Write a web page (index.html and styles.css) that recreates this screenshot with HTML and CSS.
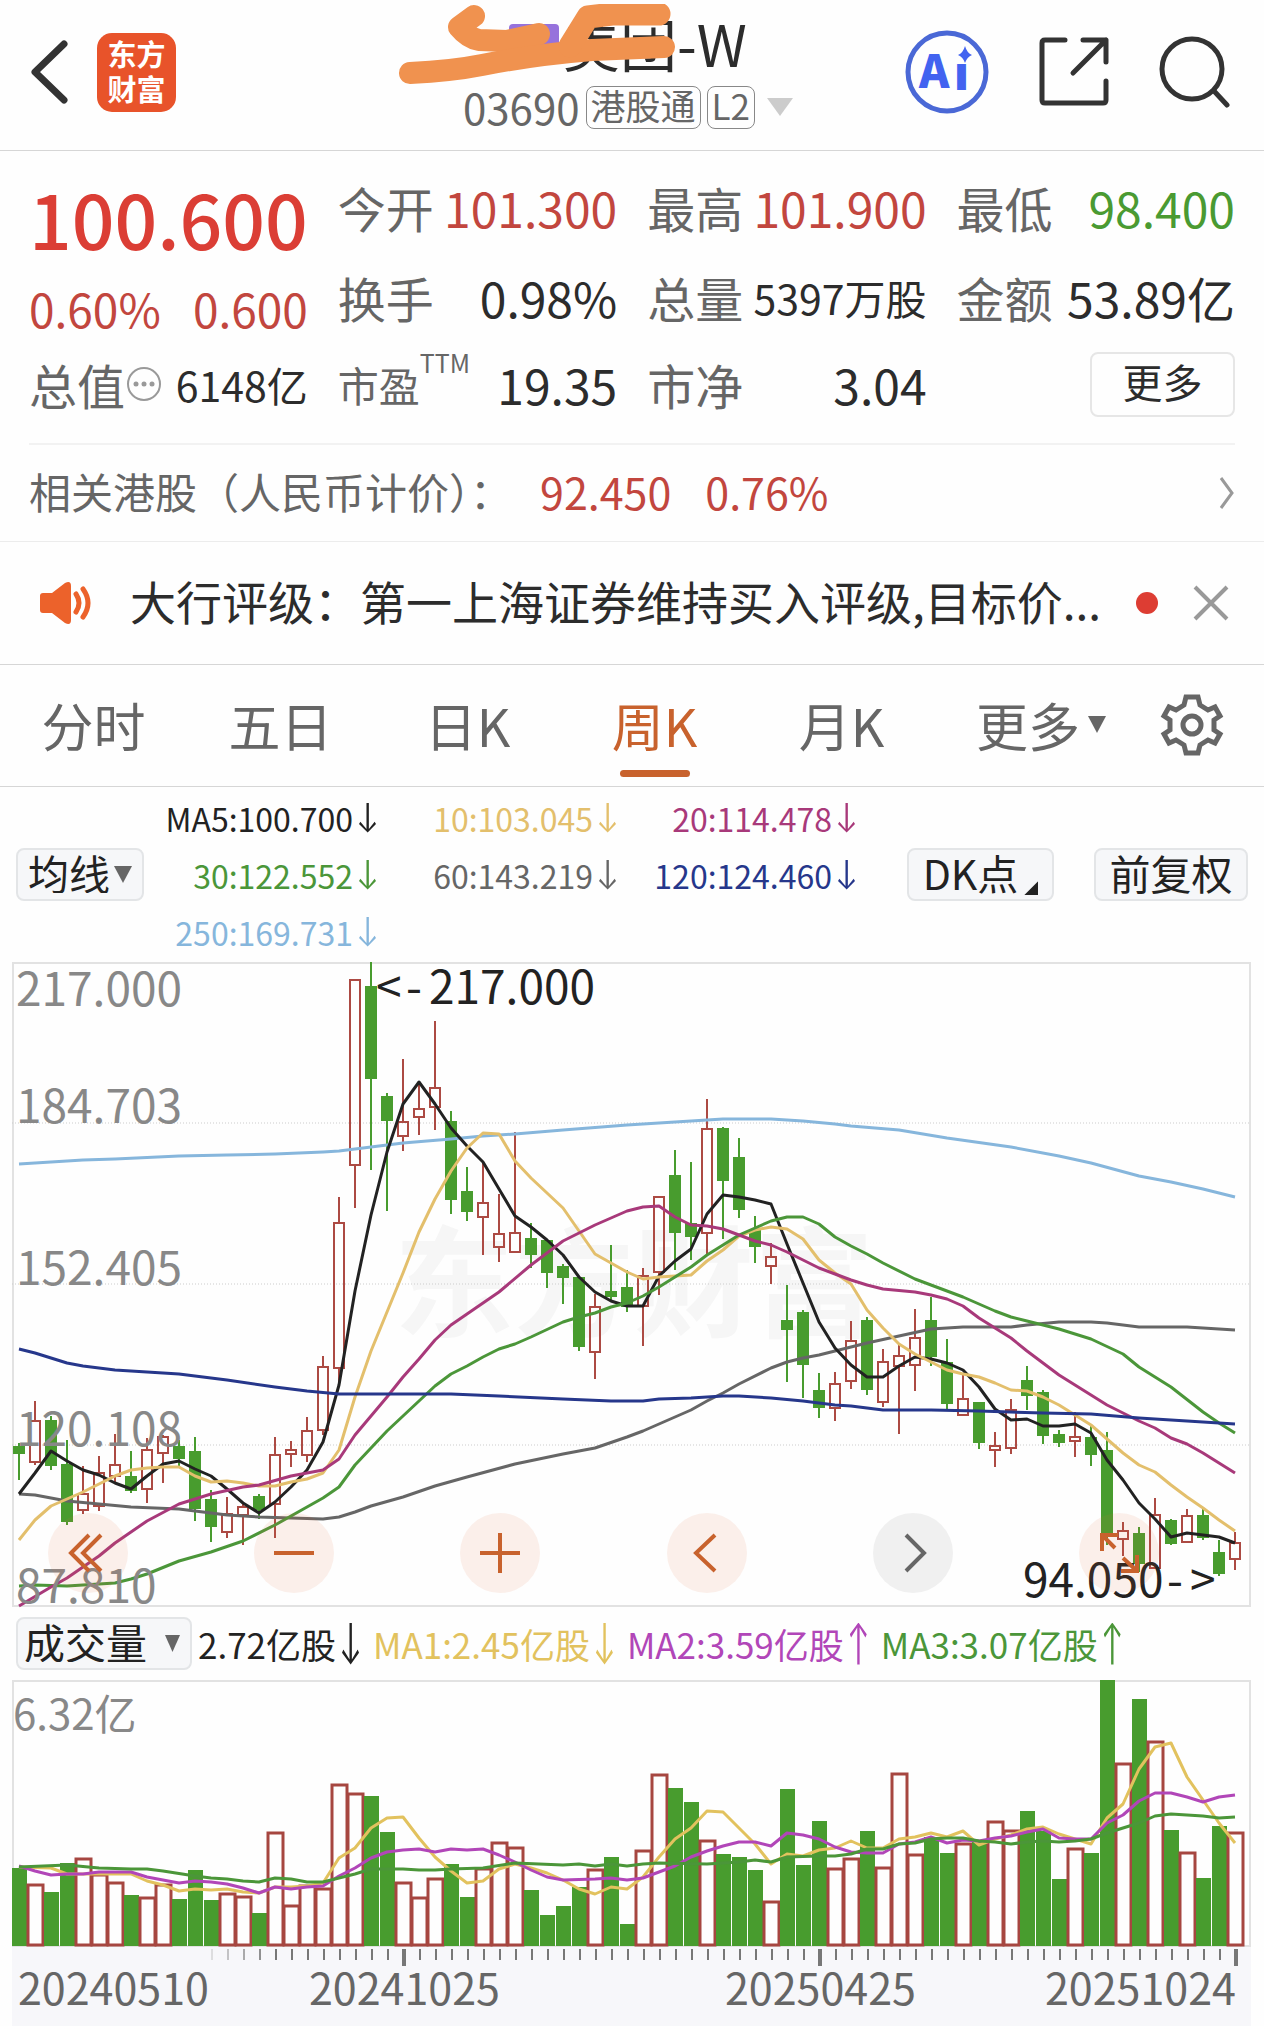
FILE: index.html
```html
<!DOCTYPE html>
<html lang="zh-CN">
<head>
  <meta charset="UTF-8">
  <meta name="viewport" content="width=device-width, initial-scale=1.0">
  <title>美团-W 03690</title>
  <link rel="stylesheet" href="styles.css">
</head>
<body>
  <!-- 顶部导航 -->
  <header class="topbar">
    <div class="topbar-left">
      <button class="icon-button" aria-label="返回">
        <svg width="44" height="66" viewBox="0 0 44 66"><path d="M38 5 L9 33 L38 61" class="ico-dark" stroke-width="7"/></svg>
      </button>
      <a class="logo" href="#">东方<br>财富</a>
    </div>
    <div class="stock">
      <h1 class="stock-name"><span class="stock-tag"></span>美团-W</h1>
      <div class="stock-code">
        <span>03690</span><span class="badge">港股通</span><span class="badge">L2</span><span class="caret caret-light"></span>
      </div>
      <svg class="marker" width="290" height="90" viewBox="395 0 290 90">
        <path d="M472 12 L457 23 Q466 34 477 36 L505 37 L537 30" stroke-width="22"/>
        <path d="M408 69 Q450 67 480 61 Q530 51 590 46 L662 43" stroke-width="22"/>
        <path d="M657 10 L610 10 L586 13 L568 42" stroke-width="23"/>
      </svg>
    </div>
    <div class="topbar-right">
      <button class="icon-button" aria-label="Ai">
        <svg width="86" height="86" viewBox="0 0 86 86">
          <circle cx="43" cy="43" r="39" fill="none" stroke="#4a68d6" stroke-width="5"/>
          <text x="15" y="59" class="ai-text">A</text>
          <text x="50" y="61" class="ai-text">ı</text>
          <path d="M61 17 Q63 24 68 26 Q63 28 61 34 Q59 28 54 26 Q59 24 61 17Z" fill="#4263f0"/>
        </svg>
      </button>
      <button class="icon-button" aria-label="分享">
        <svg width="72" height="72" viewBox="0 0 72 72"><path d="M27 4 H7 Q4 4 4 7 V64 Q4 67 7 67 H65 Q68 67 68 64 V45 M45 4 H68 V26 M68 4 L35 37" class="ico-dark" stroke-width="5"/></svg>
      </button>
      <button class="icon-button" aria-label="搜索">
        <svg width="72" height="74" viewBox="0 0 72 74"><circle cx="34" cy="34" r="30" class="ico-dark" stroke-width="5"/><path d="M56 56 L69 70" class="ico-dark" stroke-width="5"/></svg>
      </button>
    </div>
  </header>

  <!-- 行情数据 -->
  <section class="quote">
    <div class="price">100.600</div>
    <div class="cell"><span>今开</span><b class="up">101.300</b></div>
    <div class="cell"><span>最高</span><b class="up">101.900</b></div>
    <div class="cell"><span>最低</span><b class="down">98.400</b></div>
    <div class="change up"><span>0.60%</span><span>0.600</span></div>
    <div class="cell"><span>换手</span><b>0.98%</b></div>
    <div class="cell"><span>总量</span><b class="small">5397万股</b></div>
    <div class="cell"><span>金额</span><b>53.89亿</b></div>
    <div class="cell"><span>总值</span>
      <svg width="38" height="38" viewBox="0 0 38 38"><circle cx="19" cy="19" r="16" fill="none" stroke="#999" stroke-width="2"/><g fill="#999"><circle cx="11" cy="19" r="2.5"/><circle cx="19" cy="19" r="2.5"/><circle cx="27" cy="19" r="2.5"/></g></svg>
      <b class="small">6148亿</b></div>
    <div class="cell"><span class="small">市盈</span><sup>TTM</sup><b>19.35</b></div>
    <div class="cell"><span>市净</span><b>3.04</b></div>
    <div class="cell cell-end"><button class="more-button">更多</button></div>
  </section>

  <a class="related" href="#">
    <span>相关港股（人民币计价）：</span><span class="up">92.450</span><span class="up">0.76%</span>
    <svg width="16" height="34" viewBox="0 0 16 34"><path d="M2 2 L13 17 L2 32" fill="none" stroke="#999" stroke-width="3"/></svg>
  </a>

  <!-- 资讯 -->
  <section class="news">
    <svg width="56" height="46" viewBox="0 0 56 46">
      <path d="M5 13 H14 L27 3 Q33 0 33 6 V40 Q33 46 27 43 L14 33 H5 Q2 33 2 30 V16 Q2 13 5 13Z" fill="#ec622b"/>
      <path d="M38 14 Q44 23 38 32 M45 9 Q55 23 45 37" fill="none" stroke="#ec622b" stroke-width="5" stroke-linecap="round"/>
    </svg>
    <a class="news-text" href="#">大行评级：第一上海证券维持买入评级,目标价...</a>
    <span class="dot"></span>
    <button class="icon-button" aria-label="关闭">
      <svg width="38" height="38" viewBox="0 0 38 38"><path d="M3 3 L35 35 M35 3 L3 35" fill="none" stroke="#999" stroke-width="4"/></svg>
    </button>
  </section>

  <!-- 周期切换 -->
  <nav class="tabs">
    <button>分时</button>
    <button>五日</button>
    <button>日K</button>
    <button class="active">周K</button>
    <button>月K</button>
    <button>更多<span class="caret"></span></button>
    <button aria-label="设置">
      <svg width="64" height="64" viewBox="-32 -32 64 64"><path d="M-6 -28 H6 L8 -20 L16 -15 L23 -18 L28 -9 L22 -5 V5 L28 9 L23 18 L16 15 L8 20 L6 28 H-6 L-8 20 L-16 15 L-23 18 L-28 9 L-22 5 V-5 L-28 -9 L-23 -18 L-16 -15 L-8 -20Z" fill="none" stroke="#666" stroke-width="5"/><circle r="9" fill="none" stroke="#666" stroke-width="5"/></svg>
    </button>
  </nav>

  <!-- 均线 -->
  <section class="ma-bar">
    <label class="select-box"><select aria-label="均线"><option>均线</option></select><span class="caret"></span></label>
    <div class="ma-list">
      <span class="ma5 fall">MA5:100.700</span>
      <span class="ma10 fall">10:103.045</span>
      <span class="ma20 fall">20:114.478</span>
      <span class="ma30 fall">30:122.552</span>
      <span class="ma60 fall">60:143.219</span>
      <span class="ma120 fall">120:124.460</span>
      <span class="ma250 fall">250:169.731</span>
    </div>
    <button class="chip chip-dk">DK点<span class="corner"></span></button>
    <button class="chip">前复权</button>
  </section>

  <div class="chart">
    <svg id="kline" viewBox="0 0 1239 645"></svg>
    <div class="tools">
      <button aria-label="最早"><svg viewBox="-40 -40 80 80"><path d="M1 -18 L-17 0 L1 18 M13 -18 L-5 0 L13 18"/></svg></button>
      <button aria-label="缩小"><svg viewBox="-40 -40 80 80"><path d="M-20 0 H20"/></svg></button>
      <button aria-label="放大"><svg viewBox="-40 -40 80 80"><path d="M-20 0 H20 M0 -20 V20"/></svg></button>
      <button aria-label="向左"><svg viewBox="-40 -40 80 80"><path d="M8 -18 L-11 0 L8 18"/></svg></button>
      <button class="off" aria-label="向右"><svg viewBox="-40 -40 80 80"><path d="M-7 -18 L11 0 L-7 18"/></svg></button>
      <button aria-label="全屏"><svg viewBox="-40 -40 80 80"><path d="M-4 -5 L-17 -18 M-17 -2 V-18 H-1 M4 5 L18 18 M18 2 V18 H2"/></svg></button>
    </div>
  </div>

  <!-- 成交量 -->
  <section class="vol-bar">
    <label class="select-box select-vol"><select aria-label="指标"><option>成交量</option></select><span class="caret"></span></label>
    <span class="ma5 fall">2.72亿股</span>
    <span class="vol1 fall">MA1:2.45亿股</span>
    <span class="vol2 rise">MA2:3.59亿股</span>
    <span class="ma30 rise">MA3:3.07亿股</span>
  </section>

  <div class="chart">
    <svg id="volume" viewBox="0 0 1239 267"></svg>
  </div>
  <div class="chart axis">
    <svg id="axis" viewBox="0 0 1239 79"></svg>
  </div>

  <script src="chart.js"></script>
</body>
</html>
```

FILE: styles.css
```css
* {
  box-sizing: border-box;
}
body {
  margin: 0;
  background: #fefefe;
  color: #2c2c2c;
  font-family: "Noto Sans CJK SC", "Noto Sans", sans-serif;
  font-size: 48px;
  line-height: 1;
}
button,
select {
  padding: 0;
  border: none;
  background: none;
  color: inherit;
  font: inherit;
  cursor: pointer;
}
a {
  color: inherit;
  text-decoration: none;
}
svg {
  display: block;
}
.up {
  color: #c2463e;
}
.down {
  color: #4a9a32;
}
.ico-dark {
  fill: none;
  stroke: #333;
  stroke-linecap: round;
  stroke-linejoin: round;
}
.caret {
  width: 18px;
  height: 17px;
  background: #666;
  clip-path: polygon(0 0, 100% 0, 50% 100%);
}
.caret-light {
  width: 26px;
  height: 18px;
  margin-left: 6px;
  background: #ccc;
}

/* 顶部导航 */
.topbar {
  display: grid;
  grid-template-columns: 1fr auto 1fr;
  align-items: center;
  height: 151px;
  padding: 0 34px 6px 26px;
  border-bottom: 1px solid #d6d6d6;
}
.topbar-left,
.topbar-right {
  display: flex;
  align-items: center;
}
.topbar-left {
  gap: 27px;
}
.topbar-right {
  justify-content: flex-end;
  gap: 48px;
}
.logo {
  width: 79px;
  height: 79px;
  padding-top: 3px;
  border-radius: 15px;
  background: #e8532a;
  color: #fff;
  font-size: 29px;
  font-weight: 700;
  line-height: 35px;
  text-align: center;
}
.stock {
  position: relative;
  display: flex;
  flex-direction: column;
  align-items: center;
  padding-top: 6px;
}
.stock-name {
  display: flex;
  align-items: center;
  gap: 4px;
  margin: 0;
  font-size: 57px;
  font-weight: 400;
  line-height: 64px;
}
.stock-tag {
  width: 50px;
  height: 37px;
  border-radius: 4px;
  background: #9672dc;
}
.stock-code {
  display: flex;
  align-items: center;
  gap: 6px;
  height: 66px;
  color: #666;
  font-size: 42px;
}
.badge {
  height: 43px;
  padding: 0 4px;
  border: 1px solid #888;
  border-radius: 8px;
  font-size: 35px;
  line-height: 36px;
}
.marker {
  position: absolute;
  top: 0;
  left: -66px;
  fill: none;
  stroke: #f0924f;
  stroke-linecap: round;
  stroke-linejoin: round;
}
.ai-text {
  fill: #4263f0;
  font-size: 46px;
  font-weight: 900;
}

/* 行情数据 */
.quote {
  display: grid;
  grid-template-columns: 275fr 280fr 280fr 279fr;
  grid-template-rows: 90px 90px 84px;
  column-gap: 30px;
  margin: 0 29px;
  padding: 11px 0 17px;
  border-bottom: 2px solid #f2f2f2;
}
.price {
  padding-top: 18px;
  color: #db3e35;
  font-size: 75px;
  font-weight: 500;
  text-align: right;
}
.change {
  display: flex;
  justify-content: space-between;
  padding-top: 33px;
  font-size: 46px;
}
.cell {
  display: flex;
  align-items: center;
  color: #666;
  white-space: nowrap;
}
.cell b {
  margin-left: auto;
  color: #2c2c2c;
  font-weight: 400;
}
.cell b.up {
  color: #c2463e;
}
.cell b.down {
  color: #4a9a32;
}
.cell .small {
  font-size: 41px;
}
.cell sup {
  align-self: flex-start;
  padding-top: 8px;
  font-size: 25px;
}
.cell-end {
  justify-content: flex-end;
}
.more-button {
  width: 145px;
  height: 65px;
  padding-bottom: 6px;
  border: 2px solid #e6e6e6;
  border-radius: 8px;
  color: #2c2c2c;
  font-size: 40px;
}
.related {
  display: flex;
  align-items: center;
  gap: 34px;
  height: 97px;
  padding: 0 29px;
  border-bottom: 1px solid #ececec;
  color: #666;
  font-size: 42px;
}
.related span {
  padding-bottom: 4px;
}
.related span:first-child {
  margin-right: -6px;
}
.related .up {
  font-size: 43px;
}
.related svg {
  margin-left: auto;
}

/* 资讯 */
.news {
  display: flex;
  align-items: center;
  height: 123px;
  padding: 0 34px 0 38px;
  border-bottom: 1px solid #d6d6d6;
}
.news-text {
  flex: 1;
  margin-left: 36px;
  padding-bottom: 6px;
  font-size: 46px;
  white-space: nowrap;
}
.dot {
  width: 22px;
  height: 22px;
  margin-right: 34px;
  border-radius: 50%;
  background: #dd3d33;
}

/* 周期切换 */
.tabs {
  display: grid;
  grid-template-columns: repeat(5, 187fr) 212fr 90fr;
  height: 122px;
  padding-right: 27px;
  border-bottom: 1px solid #d6d6d6;
}
.tabs button {
  display: flex;
  align-items: center;
  justify-content: center;
  gap: 8px;
  padding-bottom: 2px;
  color: #666;
  font-size: 52px;
}
.tabs .active {
  position: relative;
  color: #c8622d;
}
.tabs .active::after {
  content: "";
  position: absolute;
  bottom: 9px;
  width: 70px;
  height: 7px;
  border-radius: 4px;
  background: #c8622d;
}

/* 均线 */
.ma-bar {
  display: flex;
  align-items: center;
  height: 175px;
  padding: 0 16px;
}
.select-box,
.chip {
  display: flex;
  align-items: center;
  height: 53px;
  border: 2px solid #e3e5e7;
  border-radius: 8px;
  background: #f6f7f9;
  color: #222;
  font-size: 41px;
}
.select-box {
  gap: 4px;
  padding: 0 10px;
}
.select-box select {
  height: 60px;
  padding-bottom: 4px;
  appearance: none;
}
.select-vol {
  gap: 18px;
  padding: 0 10px 0 6px;
}
.chip {
  justify-content: center;
  width: 154px;
  padding-bottom: 4px;
}
.chip-dk {
  width: 147px;
  gap: 6px;
  margin: 0 40px 0 auto;
}
.corner {
  align-self: flex-end;
  width: 14px;
  height: 14px;
  background: #222;
  clip-path: polygon(100% 0, 100% 100%, 0 100%);
}
.ma-list {
  display: grid;
  grid-template-columns: 232px 240px 239px;
  grid-auto-rows: 57px;
  font-size: 32px;
}
.ma-list span {
  display: flex;
  align-items: center;
  justify-content: flex-end;
}
.ma5 { color: #222; }
.ma10 { color: #e3bf6c; }
.ma20 { color: #a8397a; }
.ma30 { color: #4b9639; }
.ma60 { color: #666; }
.ma120 { color: #26378b; }
.ma250 { color: #86b6dc; }
.vol1 { color: #e2c25e; }
.vol2 { color: #b146b8; }
/* 涨跌箭头 */
.fall::after,
.rise::after {
  content: "";
  flex: none;
  width: 17px;
  height: 30px;
  margin-left: 6px;
  background: currentColor;
  clip-path: polygon(44% 0, 58% 0, 58% 88%, 92% 64%, 100% 72%, 51% 100%, 0 72%, 8% 64%, 44% 88%);
}
.rise::after {
  clip-path: polygon(44% 100%, 58% 100%, 58% 12%, 92% 36%, 100% 28%, 51% 0, 0 28%, 8% 36%, 44% 12%);
}

/* K线图 */
.chart {
  position: relative;
  margin: 0 13px 0 12px;
}
.chart > svg {
  width: 100%;
  height: auto;
  overflow: visible;
}
.chart text {
  font-size: 46px;
}
.tools {
  position: absolute;
  right: 92px;
  bottom: 14px;
  left: 36px;
  display: flex;
  justify-content: space-between;
}
.tools button {
  width: 80px;
  height: 80px;
  border-radius: 50%;
  background: rgba(226, 110, 55, 0.1);
}
.tools .off {
  background: rgba(120, 120, 120, 0.1);
}
.tools path {
  fill: none;
  stroke: #c8622d;
  stroke-width: 4;
}
.tools .off path {
  stroke: #666;
}
.frame {
  fill: none;
  stroke: #e2e2e2;
  stroke-width: 2;
}
.grid-line {
  stroke: #ccc;
  stroke-dasharray: 1 2;
}
.line {
  fill: none;
  stroke: currentColor;
  stroke-width: 3;
  stroke-linejoin: round;
}
.scale {
  fill: #888;
}
.mark {
  fill: #222;
}
.chart .watermark {
  fill: #f6f6f6;
  font-size: 120px;
  font-weight: 700;
}
.red {
  fill: none;
  stroke: #ac4a43;
  stroke-width: 2;
}
.green {
  fill: #489c2e;
  stroke: #489c2e;
  stroke-width: 2;
}
.bar-red {
  fill: #fefefe;
  stroke: #a64640;
  stroke-width: 3;
}
.bar-green {
  fill: #489c2e;
}

/* 成交量 */
.vol-bar {
  display: flex;
  align-items: center;
  gap: 14px;
  height: 73px;
  padding: 0 16px;
  font-size: 35px;
}
.vol-bar > span {
  display: flex;
  align-items: center;
  white-space: nowrap;
}
.vol-bar .select-box {
  width: 176px;
  margin-right: -8px;
}
.vol-bar > span::after {
  height: 42px;
}
.chart .vol-label {
  font-size: 42px;
}
.axis {
  background: #f7f7fa;
}
.axis line {
  stroke: #777;
  stroke-width: 2;
}
.chart.axis text {
  fill: #666;
  font-size: 43px;
}
```

FILE: chart.js
```js
// 每根K线: 颜色, 最高, 实体上沿, 实体下沿, 最低
const candles = `g 481 485 491 518|r 439 459 500 503|g 454 459 503 508|g 478 503 559 563|r 504 532 548 552|r 494 511 544 549
r 472 503 514 520|g 489 515 528 531|r 476 488 527 541|r 473 475 491 521|g 478 485 496 504|g 475 490 546 559
g 528 538 564 580|r 535 552 570 576|r 541 545 553 583|g 532 535 547 557|r 475 493 542 576|r 479 488 492 505
r 455 469 493 500|r 394 405 468 473|r 235 261 406 425|r 17 18 203 246|g 0 25 116 208|g 131 135 158 249
r 97 160 174 189|r 120 147 155 173|r 59 126 145 168|g 149 160 237 252|g 205 230 249 259|r 201 241 255 293
r 232 272 285 300|r 170 271 290 290|g 261 277 292 306|g 278 279 310 326|g 302 305 315 342|g 315 316 384 389
r 332 345 390 417|g 283 330 334 338|g 308 326 344 350|r 306 314 344 384|r 235 235 310 333|g 188 214 270 308
g 200 262 274 298|r 137 167 271 292|g 165 167 218 277|g 176 196 247 256|g 254 269 284 301|r 281 295 304 322
g 323 359 367 420|g 348 351 402 436|g 411 429 445 456|r 410 422 446 459|r 359 379 419 427|g 355 359 427 433
r 387 400 440 445|r 383 394 404 472|r 347 376 403 429|g 335 359 394 404|g 377 401 441 447|r 411 437 453 454
g 440 441 480 487|r 470 484 488 505|r 437 448 486 492|g 404 419 433 448|g 428 431 473 482|g 468 473 480 485
r 450 475 479 495|g 463 476 492 504|g 470 489 571 583|r 560 569 577 594|g 565 572 601 610|r 536 553 606 607
g 557 559 581 583|r 547 554 580 580|g 547 554 575 578|g 578 591 611 614|r 570 581 597 608`
  .split(/[|\n]/).map(row => row.split(' '));

// 均线: "序号,y"
const priceLines = {
  ma250: '0,202 4,198 6,197 10,194 13,193 16,192 19,190 20,189 22,185 24,181 27,177 29,174 31,172 34,168 38,163 41,160 44,157 47,157 49,159 51,162 52,164 55,168 58,176 62,185 65,194 67,201 70,214 72,220 74,227 76,235',
  ma60: '0,532 1,533 3,539 7,545 10,547 13,553 15,555 19,557 20,555 21,550 22,544 24,535 26,524 28,515 31,502 34,492 36,486 38,475 39,469 40,462 42,448 43,439 44,431 45,422 47,406 48,400 49,396 50,393 52,385 53,381 55,374 57,367 59,365 62,365 63,363 65,360 67,360 68,361 70,365 73,365 74,366 76,368',
  ma5: '0,532 1,511 2,489 3,499 4,508 5,513 6,521 7,527 8,514 9,502 10,499 11,507 12,514 13,527 14,541 15,551 16,540 17,525 18,508 19,480 20,423 21,329 22,253 23,190 24,142 25,120 26,142 27,166 28,184 29,200 30,227 31,254 32,265 33,278 34,293 35,315 36,330 37,339 38,344 39,344 40,314 41,299 42,287 43,252 44,233 45,235 46,238 47,242 48,282 49,321 50,360 51,386 52,403 53,415 54,415 55,404 56,395 57,397 58,401 59,408 60,425 61,447 62,458 63,457 64,464 65,464 66,462 67,471 68,498 69,518 70,541 71,557 72,575 73,571 74,573 75,575 76,581',
  ma10: '0,578 1,558 2,544 3,537 4,530 5,522 6,514 7,508 8,506 9,505 10,505 11,514 12,520 13,519 14,521 15,524 16,524 17,520 18,517 19,511 20,488 21,435 22,389 23,350 24,311 25,270 26,237 27,209 28,186 29,171 30,172 31,199 32,216 33,231 34,246 35,269 36,292 37,301 38,310 39,317 40,315 41,314 42,313 43,299 44,288 45,274 46,268 47,265 48,267 49,277 50,298 51,311 52,322 53,348 54,366 55,382 56,392 57,400 58,408 59,412 60,415 61,421 62,428 63,429 64,435 65,443 66,453 67,463 68,477 69,491 70,503 71,510 72,523 73,535 74,546 75,558 76,569',
  ma30: '0,624 1,623 3,624 5,622 6,621 7,617 8,612 10,599 12,590 14,579 16,563 18,545 19,536 20,525 21,503 22,486 23,469 24,454 25,439 26,424 27,412 28,404 29,395 30,387 31,382 32,375 34,360 35,355 36,351 37,345 38,341 39,334 40,325 41,315 42,305 43,293 44,283 45,273 46,266 47,259 48,255 49,255 50,262 51,275 52,284 53,292 54,301 56,317 57,323 59,335 61,349 62,355 63,359 65,367 67,377 69,392 70,405 72,425 74,450 75,461 76,471',
  ma20: '0,644 2,625 3,616 4,605 5,594 6,581 8,559 10,542 12,532 14,525 15,523 17,514 19,508 20,497 21,473 22,454 23,435 24,415 25,397 26,378 27,363 28,352 30,330 32,303 34,279 36,263 38,249 39,245 40,244 41,255 42,263 43,264 44,267 45,273 46,279 47,283 48,290 49,298 50,306 51,312 52,318 53,323 54,327 56,330 57,333 58,337 59,344 60,356 61,366 62,376 63,389 64,401 65,413 66,423 68,443 70,459 71,466 72,476 73,482 74,491 75,501 76,511',
  ma120: '0,387 1,391 2,396 3,401 4,404 6,408 8,410 10,412 13,418 16,425 18,429 20,432 24,432 27,432 30,434 34,437 37,439 39,439 40,437 42,436 44,434 45,434 47,436 49,439 51,443 52,444 54,448 57,448 60,449 64,451 67,452 70,456 73,459 76,462'
};

// 成交量柱顶的 y
const volumes = [188, 203, 212, 183, 177, 193, 201, 215, 216, 203, 219, 190, 220, 212, 215, 233, 151, 224, 204, 207,
  103, 112, 116, 152, 201, 216, 197, 184, 217, 187, 161, 166, 210, 235, 226, 207, 188, 177, 244, 169,
  93, 108, 122, 159, 174, 177, 190, 220, 109, 185, 141, 187, 177, 151, 186, 92, 173, 157, 173, 162,
  161, 140, 149, 131, 151, 199, 167, 173, 0, 82, 19, 60, 150, 171, 198, 146, 151];

const volumeLines = {
  vol1: '0,187 2,188 3,194 7,194 8,201 9,205 10,211 11,209 12,210 13,209 14,212 15,213 16,207 17,207 18,206 19,203 20,178 21,168 22,148 23,138 24,137 25,158 26,177 27,191 28,203 29,201 30,189 31,184 32,188 33,193 34,200 35,209 36,214 37,207 38,209 39,197 40,177 41,159 42,148 43,131 44,132 45,148 46,164 47,184 48,174 49,176 50,170 51,168 52,161 53,168 54,168 55,159 56,157 57,153 58,157 59,151 60,165 61,159 62,155 63,149 64,147 65,154 66,159 67,164 68,138 69,124 70,89 71,67 72,63 73,97 74,120 75,143 76,163',
  vol2: '0,186 1,191 2,195 3,194 4,194 5,192 7,192 8,197 9,200 10,203 11,201 12,202 13,204 14,208 15,213 16,207 17,209 18,207 19,206 20,196 21,188 22,178 23,172 24,170 25,169 26,172 27,169 28,170 29,169 30,175 31,182 32,190 33,197 34,200 36,199 37,198 38,200 39,198 40,192 41,186 42,177 43,171 44,166 45,162 46,162 47,166 48,153 49,155 50,159 51,167 52,172 53,173 54,173 55,164 56,162 57,157 58,163 59,160 60,161 61,158 62,156 63,152 64,149 65,158 66,159 67,159 68,143 69,135 70,121 71,113 72,113 73,117 74,122 75,117 76,115',
  ma30: '0,187 3,185 5,188 7,189 8,189 9,191 11,196 12,198 13,199 14,201 15,202 16,198 17,199 18,202 19,202 20,198 21,194 22,189 24,189 25,190 26,190 27,189 29,188 31,183 34,185 35,184 36,186 37,184 38,186 39,184 40,183 43,184 45,182 46,180 47,182 48,177 50,176 51,176 52,174 53,169 54,169 55,164 56,163 57,159 58,158 59,158 60,161 61,162 62,164 63,162 64,161 65,162 66,161 67,159 68,153 69,148 70,143 71,136 72,134 74,136 75,138 76,137'
};

const xAt = i => 7 + 16 * i;

function drawLines(lines) {
  return Object.entries(lines).map(([name, data]) => {
    const points = data.split(' ').map(p => {
      const [i, y] = p.split(',');
      return xAt(Number(i)) + ',' + y;
    }).join(' ');
    return `<polyline class="line ${name}" points="${points}"/>`;
  }).join('');
}

// K线图
function drawKline() {
  let out = '<text class="watermark" x="382" y="366">东方财富</text>';
  out += '<rect class="frame" x="1" y="1" width="1237" height="643"/>';
  [161, 322, 483].forEach(y => {
    out += `<line class="grid-line" x1="0" x2="1239" y1="${y}" y2="${y}"/>`;
  });
  candles.forEach(([color, high, top, bottom, low], i) => {
    const x = xAt(i);
    const cls = color === 'r' ? 'red' : 'green';
    out += `<path class="${cls}" d="M${x} ${high}V${top}M${x} ${bottom}V${low}M${x - 5} ${top}h10V${bottom}h-10Z"/>`;
  });
  out += drawLines(priceLines);
  [['217.000', 44], ['184.703', 161], ['152.405', 323], ['120.108', 484], ['87.810', 641]].forEach(([label, y]) => {
    out += `<text class="scale" x="4" y="${y}">${label}</text>`;
  });
  out += '<text class="mark" x="364" y="42">&lt;<tspan x="394">-</tspan><tspan x="417">217.000</tspan></text>';
  out += '<text class="mark" x="1011" y="635">94.050<tspan x="1155">-</tspan><tspan x="1178">&gt;</tspan></text>';
  document.getElementById('kline').innerHTML = out;
}

// 成交量
function drawVolume() {
  let out = '<rect class="frame" x="1" y="1" width="1237" height="265"/>';
  volumes.forEach((y, i) => {
    const x = xAt(i);
    if (candles[i][0] === 'r') {
      out += `<rect class="bar-red" x="${x - 7}" y="${y + 2}" width="15" height="${263 - y}"/>`;
    } else {
      out += `<rect class="bar-green" x="${x - 7}" y="${y}" width="15" height="${266 - y}"/>`;
    }
  });
  out += drawLines(volumeLines);
  out += '<text class="scale vol-label" x="1" y="50">6.32亿</text>';
  document.getElementById('volume').innerHTML = out;
}

// 日期轴
function drawAxis() {
  let out = '';
  for (let i = 12; i <= 76; i++) {
    const x = xAt(i) + 1;
    const major = i === 24 || i === 50 || i === 76;
    const opacity = Math.min(1, (i - 11) / 5);
    out += `<line x1="${x}" x2="${x}" y1="2" y2="${major ? 19 : 13}" style="stroke-width:${major ? 4 : 2};opacity:${opacity}"/>`;
  }
  [['20240510', 6], ['20241025', 297], ['20250425', 713], ['20251024', 1033]].forEach(([date, x]) => {
    out += `<text x="${x}" y="58">${date}</text>`;
  });
  document.getElementById('axis').innerHTML = out;
}

drawKline();
drawVolume();
drawAxis();
```
